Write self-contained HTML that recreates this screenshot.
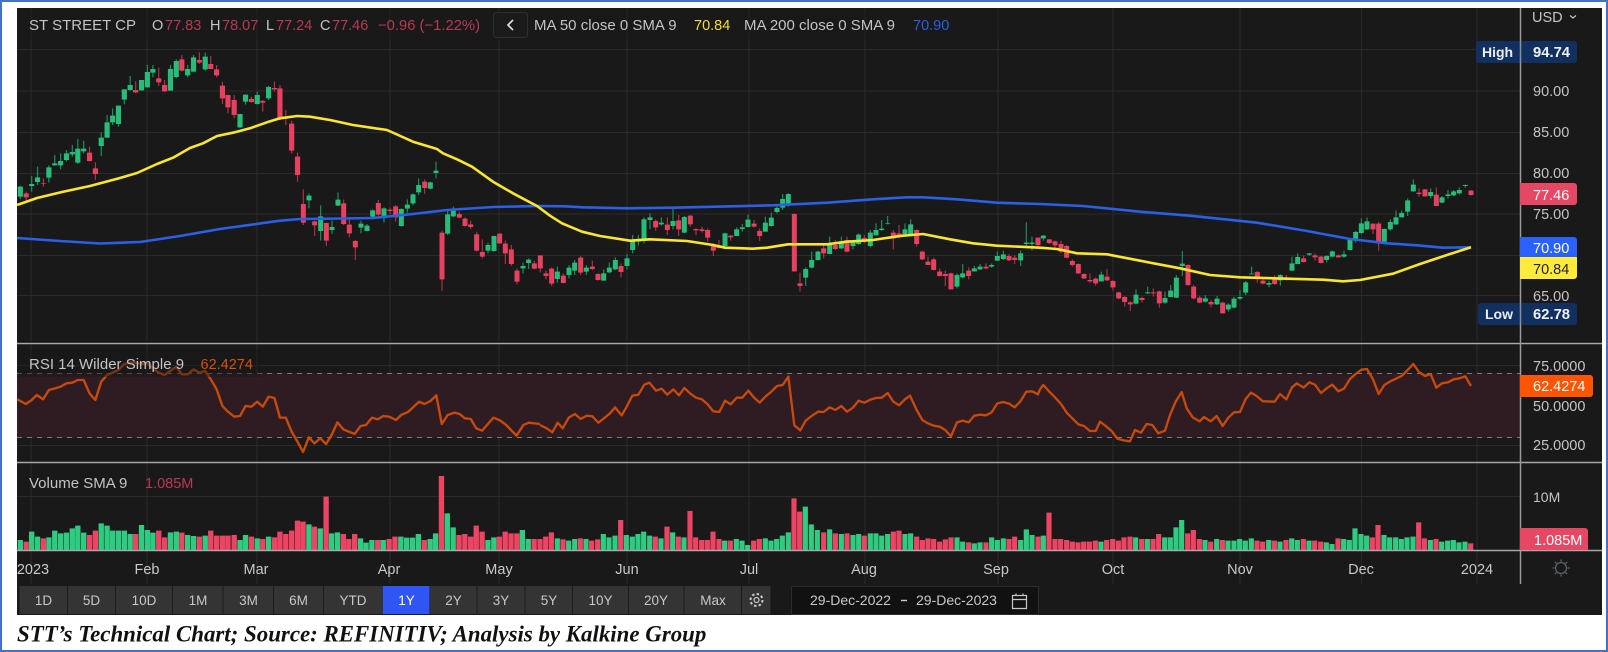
<!DOCTYPE html>
<html><head><meta charset="utf-8"><title>STT Technical Chart</title>
<style>
html,body{margin:0;padding:0;background:#fff}
svg{display:block}
text{font-family:"Liberation Sans",sans-serif;font-size:14.5px;fill:#c4c4c4}
.w{fill:#fff}
.r{fill:#b83a52}
.t{font-size:15px}
.m{text-anchor:middle;font-size:14.5px;fill:#c8c8c8}
.b{text-anchor:middle;font-size:13.5px;fill:#c8c8c8}
.gb{stroke:#27bd78;stroke-width:15;fill:none}
.gw{stroke:#1d8f5b;stroke-width:3.5;fill:none}
.rb{stroke:#e8405f;stroke-width:15;fill:none}
.rw{stroke:#a93349;stroke-width:3.5;fill:none}
.vg{stroke:#2ecb80;stroke-width:15.5;fill:none}
.vr{stroke:#ee4464;stroke-width:15.5;fill:none}
.y{fill:none;stroke:#fbe62e;stroke-width:2.6;stroke-linejoin:round}
.bl{fill:none;stroke:#2a5fe8;stroke-width:2.6;stroke-linejoin:round}
.o{fill:none;stroke:#c74a0c;stroke-width:7;stroke-linejoin:round}
</style></head><body>
<svg width="1608" height="652" viewBox="0 0 1608 652" xmlns="http://www.w3.org/2000/svg">
<defs><clipPath id="c"><rect x="17" y="8" width="1585" height="607"/></clipPath></defs>
<rect width="1608" height="652" fill="#fff"/>
<rect x="1" y="1" width="1606" height="650" fill="none" stroke="#4472c4" stroke-width="2"/>
<g clip-path="url(#c)">
<rect x="17" y="8" width="1585" height="607" fill="#191919"/>
<!-- grid -->
<path d="M17 49.5H1520M17 91H1520M17 132.500H1520M17 173.500H1520M17 214H1520M17 255.500H1520M17 295.500H1520M17 365.500H1520M17 405.500H1520M17 445.500H1520M17 496.500H1520M31 8V584M147 8V584M257 8V584M390 8V584M499 8V584M627 8V584M749 8V584M865 8V584M998 8V584M1113 8V584M1240 8V584M1361.500 8V584M1477 8V584" stroke="#2a2a2a" stroke-width="1" fill="none"/>
<!-- rsi band -->
<rect x="17" y="373" width="1503" height="65" fill="#2f1b22"/>
<path d="M17 373.500H1520M17 437.500H1520" stroke="#7a7a7a" stroke-dasharray="5 5" fill="none"/>
<!-- candles A -->
<g transform="scale(.34435,.33333)">
<path class="gw" d="M59 557V597M92 528V575M109 500V555M142 497V548M159 465V497M176 460V507M193 450V484M210 435V470M226 417V492M243 422V460M294 397V468M311 345V414M327 325V375M344 316V380M361 268V313M378 228V272M411 240V272M428 195V263M444 195V232M495 195V272M512 178V235M545 195V232M562 165V217M596 158V212M697 342V384M713 283V314M747 275V314M780 258V300"/>
<path class="rw" d="M76 575V600M126 535V560M260 440V485M277 487V540M394 243V280M461 203V258M478 240V276M528 165V215M579 157V192M612 168V208M629 195V232M646 245V312M662 284V340M680 285V355M730 290V308M763 300V335M797 245V275M813 255V360M830 330V375M847 362V460M864 458V545"/>
<path class="gb" d="M59 560V590M92 552V558M109 532V546M142 502V533M159 490V496M176 483V496M193 460V480M210 456V463M226 446V488M243 446V454M294 413V438M311 367V413M327 347V367M344 317V372M361 268V299M378 255V270M411 240V271M428 216V262M444 207V218M495 207V272M512 183V231M545 207V226M562 172V215M596 170V208M697 342V382M713 284V305M747 285V312M780 261V295"/>
<path class="rb" d="M76 580V592M126 549V551M260 458V483M277 505V522M394 270V277M461 235V247M478 255V274M528 178V212M579 180V188M612 192V207M629 208V226M646 257V295M662 285V322M680 300V345M730 297V306M763 303V308M797 264V268M813 265V357M830 350V356M847 371V452M864 470V525"/>
</g>
<!-- candles B -->
<g transform="translate(280,130) scale(.33333)">
<path class="gw" d="M87 190V235M122 226V332M156 272V312M174 187V228M243 272V310M261 282V304M278 238V268M312 232V278M364 235V290M382 208V248M399 190V226M416 145V195M451 155V178M468 95V145M503 238V315M520 230V262M624 338V370M642 317V365M729 398V430M746 385V417M832 410V458"/>
<path class="rw" d="M70 178V285M104 272V318M139 278V348M191 208V285M208 265V322M226 330V390M295 210V258M330 233V252M347 225V275M434 148V192M486 302V482M538 245V265M555 262V290M572 272V298M590 305V365M607 328V385M659 310V342M676 332V402M694 345V408M711 415V463M763 392V418M781 376V427M798 422V448M815 412V468"/>
<path class="gb" d="M87 197V211M122 259V303M156 291V300M174 209V227M243 281V293M261 287V303M278 241V260M312 235V258M364 237V288M382 224V236M399 193V220M416 165V187M451 157V176M468 122V129M503 253V311M520 242V259M624 345V362M642 318V363M729 408V415M746 389V399M832 425V447"/>
<path class="rb" d="M70 222V278M104 274V286M139 279V332M191 220V282M208 284V310M226 333V352M295 219V254M330 239V243M347 229V262M434 155V174M486 308V448M538 252V263M555 266V288M572 283V291M590 313V362M607 366V380M659 311V340M676 341V370M694 358V402M711 422V455M763 400V416M781 376V415M798 430V438M815 416V461"/>
</g>
<!-- candles C -->
<g transform="translate(540,180) scale(.33333)">
<path class="gw" d="M87 255V295M104 240V285M139 255V285M191 268V302M208 248V280M226 232V270M261 222V268M278 165V220M295 165V197M312 112V190M330 100V148M364 112V137M399 85V148M433 108V160M555 158V205M590 142V168M607 132V155M624 104V142M676 110V155M694 98V140M711 78V100M728 42V90M745 40V80M797 262V318M815 215V265M834 212V242M869 170V222M904 170V207M939 180V208M956 160V195M991 150V202M1008 130V165M1025 120V153M1043 108V133M1095 130V170M1112 118V168M1251 280V325M1268 252V295M1303 258V275M1320 252V270M1355 250V263M1372 215V243M1390 212V240M1442 212V258M1459 127V200M1476 170V212"/>
<path class="rw" d="M70 280V310M122 228V285M157 242V270M174 280V302M243 250V292M347 118V152M382 112V165M416 105V168M451 105V140M468 145V165M486 140V158M503 145V185M520 190V228M537 180V205M572 165V182M642 120V142M659 145V183M763 100V275M780 278V335M851 195V235M886 180V210M921 170V217M973 165V190M1060 150V208M1077 135V175M1130 148V200M1147 212V240M1164 230V255M1181 233V272M1199 265V290M1216 272V318M1233 278V328M1286 262V298M1338 250V268M1407 222V243M1424 225V252M1494 172V207"/>
<path class="gb" d="M87 263V285M104 248V272M139 263V275M191 280V302M208 263V277M226 240V268M261 235V258M278 180V210M295 180V185M312 118V183M330 112V120M364 128V133M399 123V138M433 111V158M555 160V198M590 148V168M607 142V147M624 119V141M676 128V155M694 113V138M711 84V96M728 57V83M745 42V72M797 267V293M815 240V263M834 215V240M869 192V222M904 187V205M939 183V198M956 164V192M991 158V198M1008 150V166M1025 146V150M1043 130V132M1095 148V163M1112 133V166M1251 285V320M1268 280V292M1303 265V274M1320 260V268M1355 255V260M1372 228V242M1390 223V237M1442 220V241M1459 188V192M1476 188V192"/>
<path class="rb" d="M70 287V309M122 233V278M157 260V267M174 282V300M243 258V276M347 123V142M382 134V150M416 121V148M451 107V133M468 147V151M486 148V153M503 150V173M520 197V212M537 196V204M572 167V172M642 131V140M659 153V168M763 102V274M780 310V318M851 205V220M886 195V207M921 180V215M973 174V180M1060 158V175M1077 160V172M1130 150V192M1147 215V238M1164 245V255M1181 238V270M1199 275V288M1216 282V288M1233 280V328M1286 272V288M1338 260V265M1407 228V241M1424 233V240M1494 173V195"/>
</g>
<!-- candles D -->
<g transform="translate(1040,170) scale(.33333)">
<path class="gw" d="M10 195V212M184 305V335M288 358V403M323 350V372M375 365V402M392 345V382M409 315V384M427 243V318M496 375V398M531 378V405M565 400V425M582 380V415M600 360V390M617 333V375M635 290V313M687 333V352M721 313V347M756 260V303M773 250V283M808 249V258M860 255V278M877 242V262M912 242V263M930 205V242M947 183V218M964 145V192M981 142V180M1033 175V218M1051 148V182M1068 122V165M1085 122V142M1103 85V138M1120 28V65M1172 55V85M1206 78V100M1224 60V85M1241 60V78M1258 52V73M1276 44V52"/>
<path class="rw" d="M28 207V222M45 212V235M63 213V250M80 225V265M97 268V290M115 280V312M132 310V327M150 310V338M167 322V347M201 297V333M219 330V362M236 365V388M254 378V410M271 393V423M306 380V398M340 355V380M358 362V413M444 283V347M461 345V388M479 378V400M513 390V412M548 395V430M652 303V338M669 325V343M704 315V345M739 315V332M791 257V278M825 250V272M843 258V280M895 253V263M999 160V192M1016 155V242M1137 55V80M1155 57V80M1189 52V108M1293 60V77"/>
<path class="gb" d="M10 197V205M184 314V334M288 374V401M323 367V370M375 384V398M392 362V381M409 323V383M427 281V288M496 385V395M531 386V403M565 404V418M582 386V413M600 381V386M617 337V368M635 311V313M687 339V344M721 315V331M756 280V302M773 261V282M808 250V254M860 258V270M877 244V260M912 253V260M930 210V240M947 186V208M964 160V189M981 154V178M1033 177V215M1051 156V178M1068 142V163M1085 129V142M1103 91V125M1120 44V64M1172 66V78M1206 82V98M1224 73V78M1241 64V76M1258 60V70M1276 45V48"/>
<path class="rb" d="M28 208V219M45 214V226M63 222V245M80 228V263M97 273V285M115 282V310M132 312V325M150 330V334M167 326V340M201 320V331M219 333V352M236 367V385M254 381V396M271 397V403M306 384V390M340 367V370M358 364V400M444 285V345M461 350V385M479 383V398M513 396V403M548 398V430M652 306V325M669 332V341M704 322V342M739 322V330M791 265V276M825 256V262M843 260V279M895 256V262M999 161V178M1016 161V219M1137 68V72M1155 58V79M1189 74V108M1293 62V75"/>
</g>
<!-- MA 200 -->
<path class="bl" d="M17 238L60 241L100 243.500L140 242L180 236L220 229L280 220.700L300 219L343 218.500L373 218L413 214L447 210L493 207L537 206L565 206.300L583 207.300L627 208.300L673 207.700L773 205.300L827 202.700L873 199.300L907 197.300L923 197.300L957 199.300L997 202.700L1040 204L1083 206L1140 211.700L1190 215.700L1257 222.700L1307 231L1350 239L1387 243.300L1417 245.300L1443 247.700L1471 247.300"/>
<!-- MA 50 -->
<path class="y" d="M17 205L37 198L62 192L90 186L120 178L137 173L157 164L173 157.700L190 148L203 143.300L217 136L233 132.700L250 128.300L267 122.300L280 118.300L297 116L310 116.700L330 120L353 125L387 130L413 141.700L437 149L443 153.300L457 159.300L472 166.700L493 181.700L513 193.300L537 206L550 215.700L562 223.300L582 231.700L600 236L630 240.700L650 239.300L687 241L713 245L725 247.700L753 248.700L767 247.700L788 244.300L827 244.300L847 241.700L873 240L900 236L923 234L950 239.300L973 243.300L997 245.700L1040 247.700L1057 249L1077 253.300L1107 254.300L1140 260.700L1180 268.300L1210 275L1240 277.300L1287 278.700L1323 279.700L1343 281.300L1360 280L1393 273.700L1420 264L1447 255L1471 247.300"/>
<!-- RSI -->
<g transform="scale(.34435,.33333) translate(0,1020)">
<path class="o" d="M50 178L75 192L92 180L107 165L125 178L142 150L160 145L176 140L193 130L210 128L226 120L243 120L260 160L277 180L294 125L311 105L327 98L344 90L361 72L378 68L395 68L411 72L428 70L444 85L461 98L478 105L495 92L512 80L528 103L545 103L562 88L579 98L596 93L612 118L629 148L646 198L662 215L680 230L697 228L713 198L730 200L747 185L763 200L780 170L797 174L813 233L830 233L847 275L864 305L880 336L897 292L913 310L930 295L947 312L963 285L980 247L997 268L1013 275L1030 282L1047 258L1063 255L1080 233L1097 238L1113 228L1130 230L1150 240L1165 225L1185 216L1217 185L1233 192L1250 183L1267 166L1283 252L1300 225L1320 218L1335 222L1350 235L1367 237L1383 265L1400 272L1433 233L1450 240L1470 255L1500 287L1520 255L1535 248L1568 252"/>
</g>
<g transform="translate(540,350) scale(.33333)">
<path class="o" d="M0 225L20 235L37 247L53 218L68 235L87 202L105 192L122 207L140 197L157 199L175 218L192 205L210 190L225 172L245 196L260 170L277 137L295 134L313 104L328 98L348 122L365 116L382 134L400 118L417 136L433 114L450 130L468 143L486 148L503 163L520 184L538 186L555 152L572 163L590 143L607 143L625 122L642 143L659 158L676 140L694 125L711 108L728 105L745 80L763 226L781 241L797 212L815 198L834 185L851 186L869 172L886 180L904 168L921 185L939 173L956 152L973 158L991 149L1008 144L1025 143L1043 129L1060 155L1077 166L1095 148L1110 137L1130 180L1147 210L1164 220L1181 227L1199 230L1216 240L1233 259L1251 217L1268 212L1286 217L1303 197L1320 194L1338 196L1355 187L1372 160L1390 156L1407 161L1424 172L1442 153L1459 125L1476 124L1494 133L1500 118"/>
</g>
<g transform="translate(1040,350) scale(.33333)">
<path class="o" d="M0 118L10 105L28 125L45 142L63 162L80 188L97 205L115 223L132 228L150 243L167 243L180 215L197 228L215 243L232 266L250 271L270 274L285 240L303 248L320 222L337 225L355 250L375 242L390 195L407 155L425 126L440 175L458 202L479 214L492 201L512 214L530 198L548 228L565 203L582 187L600 186L617 147L633 128L650 138L669 154L704 155L720 132L739 148L756 112L770 100L791 113L808 97L825 104L843 129L860 115L877 104L895 124L912 116L930 87L947 72L964 59L981 57L999 88L1016 132L1033 105L1051 94L1068 86L1085 78L1103 60L1120 42L1137 66L1155 78L1172 72L1189 113L1206 100L1224 97L1241 88L1258 85L1276 79L1293 108"/>
</g>
<!-- volume A -->
<g transform="translate(0,340) scale(.34435,.33333)">
<path class="vg" d="M59 600V630M92 575V630M109 590V630M142 592V630M159 572V630M176 580V630M193 578V630M210 565V630M226 557V630M243 578V630M294 550V630M311 557V630M327 572V630M344 572V630M361 572V630M378 582V630M411 555V630M428 570V630M444 578V630M495 577V630M512 575V630M545 585V630M562 588V630M596 587V630M697 600V630M713 585V630M747 595V630M780 590V630M897 553V630M930 565V630M963 580V630M980 577V630M1047 595V630M1063 608V630M1080 600V630M1113 600V630M1164 590V630M1181 593V630M1198 593V630M1215 582V630M1249 597V630M1265 580V630M1299 520V630M1316 562V630M1417 600V630M1434 592V630M1517 570V630M1534 597V630"/>
<path class="vr" d="M76 605V630M126 595V630M260 585V630M277 572V630M394 582V630M461 572V630M478 592V630M528 578V630M579 590V630M612 572V630M629 587V630M646 587V630M662 587V630M680 585V630M730 590V630M763 597V630M797 592V630M813 575V630M830 582V630M847 572V630M864 542V630M880 545V630M913 560V630M947 470V630M997 582V630M1013 597V630M1030 582V630M1097 600V630M1130 597V630M1147 590V630M1232 600V630M1282 408V630M1333 585V630M1350 582V630M1367 590V630M1383 557V630M1400 575V630M1450 590V630M1467 575V630M1484 580V630M1501 580V630M1551 597V630"/>
</g>
<!-- volume B -->
<g transform="translate(540,350) scale(.33333)">
<path class="vg" d="M52 565V600M86 572V600M104 567V600M138 567V600M190 552V600M207 562V600M225 557V600M259 555V600M277 560V600M294 552V600M311 545V600M329 557V600M363 565V600M398 547V600M432 562V600M554 572V600M589 567V600M606 572V600M623 585V600M676 565V600M693 572V600M710 567V600M727 557V600M745 547V600M796 470V600M814 523V600M832 540V600M869 538V600M904 552V600M939 555V600M956 552V600M991 550V600M1008 550V600M1025 557V600M1043 552V600M1095 552V600M1112 550V600M1251 562V600M1268 575V600M1303 580V600M1320 577V600M1355 562V600M1372 570V600M1390 565V600M1442 570V600M1459 538V600M1476 555V600"/>
<path class="vr" d="M0 567V600M17 560V600M34 547V600M69 568V600M121 565V600M155 572V600M173 568V600M242 510V600M346 560V600M381 530V600M415 560V600M450 483V600M467 562V600M485 570V600M502 570V600M519 545V600M537 567V600M571 572V600M641 572V600M658 567V600M762 445V600M779 485V600M851 547V600M886 550V600M921 550V600M973 557V600M1060 545V600M1077 542V600M1130 560V600M1147 570V600M1164 565V600M1181 567V600M1199 575V600M1216 568V600M1233 562V600M1286 577V600M1338 577V600M1407 567V600M1424 560V600M1494 560V600"/>
</g>
<!-- volume C -->
<g transform="translate(1040,350) scale(.33333)">
<path class="vg" d="M10 557V600M183 575V600M287 562V600M322 567V600M374 562V600M391 562V600M408 532V600M425 510V600M495 570V600M530 567V600M564 572V600M582 572V600M599 567V600M616 572V600M634 565V600M686 570V600M720 575V600M755 565V600M772 570V600M807 572V600M859 577V600M876 582V600M911 567V600M928 570V600M945 535V600M963 552V600M980 557V600M1032 555V600M1049 562V600M1067 562V600M1084 567V600M1101 562V600M1119 560V600M1171 570V600M1205 575V600M1223 572V600M1240 570V600M1257 577V600M1275 575V600"/>
<path class="vr" d="M27 488V600M45 567V600M62 567V600M80 570V600M97 575V600M114 577V600M131 575V600M148 575V600M166 572V600M200 570V600M218 567V600M235 572V600M252 562V600M270 560V600M305 567V600M339 567V600M356 552V600M443 550V600M460 540V600M478 567V600M512 575V600M547 570V600M651 572V600M668 575V600M703 572V600M738 570V600M790 567V600M824 572V600M842 575V600M894 565V600M997 562V600M1014 525V600M1136 517V600M1153 565V600M1188 567V600M1292 580V600"/>
</g>
<!-- pane lines -->
<path d="M17 342H1602" stroke="#0e0e0e" stroke-width="1"/>
<path d="M17 343.500H1602M17 462.500H1602M17 550.500H1602" stroke="#a8a8a8" stroke-width="1.500"/>
<path d="M1520.500 8V584" stroke="#9a9a9a" stroke-width="1.500"/>
<!-- header -->
<rect x="18" y="10" width="1000" height="30" fill="#191919" opacity=".35"/>
<text class="t" x="29" y="30">ST STREET CP</text>
<text x="152" y="30">O</text><text x="165" y="30" class="r">77.83</text>
<text x="210" y="30">H</text><text x="222" y="30" class="r">78.07</text>
<text x="266" y="30">L</text><text x="276" y="30" class="r">77.24</text>
<text x="320" y="30">C</text><text x="332" y="30" class="r">77.46</text>
<text x="378" y="30" class="r" style="font-size:14.8px">−0.96 (−1.22%)</text>
<rect x="493.500" y="12.500" width="34" height="25" rx="3" fill="#1b1b1b" stroke="#2e2e2e"/>
<path d="M513 20L508 25L513 30" fill="none" stroke="#ddd" stroke-width="1.700"/>
<text class="t" x="534" y="30">MA 50 close 0 SMA 9</text>
<text x="694" y="30" style="fill:#f4df2c">70.84</text>
<text class="t" x="744" y="30">MA 200 close 0 SMA 9</text>
<text x="913" y="30" style="fill:#2a5fe0">70.90</text>
<!-- RSI / volume legends -->
<rect x="18" y="350" width="243" height="27" fill="#191919" opacity=".45"/>
<text class="t" x="29" y="369">RSI 14 Wilder Simple 9</text>
<text x="200.500" y="369" style="fill:#d9500b">62.4274</text>
<text class="t" x="29" y="488">Volume SMA 9</text>
<text x="145" y="488" style="fill:#b83a52">1.085M</text>
<!-- axis labels -->
<text x="1532" y="22">USD</text>
<path d="M1570 15.500L1573 18L1576 15.500" fill="none" stroke="#c4c4c4" stroke-width="1.200"/>
<text x="1533" y="96">90.00</text>
<text x="1533" y="137">85.00</text>
<text x="1533" y="178">80.00</text>
<text x="1533" y="219">75.00</text>
<text x="1533" y="301">65.00</text>
<rect x="1476" y="41" width="101" height="22" rx="3" fill="#12305f"/>
<path d="M1520.500 41V63" stroke="#8a8f98" stroke-width="1.500"/>
<text x="1482" y="57" style="font-weight:bold;fill:#e8edf5;font-size:14px">High</text>
<text x="1533" y="57" style="fill:#eef1f6;font-weight:bold;font-size:14.8px">94.74</text>
<rect x="1478" y="303" width="99" height="22" rx="3" fill="#12305f"/>
<path d="M1520.500 303V325" stroke="#8a8f98" stroke-width="1.500"/>
<text x="1485" y="319" style="fill:#e8edf5;font-weight:bold;font-size:14px">Low</text>
<text x="1533" y="319" style="fill:#eef1f6;font-weight:bold;font-size:14.8px">62.78</text>
<path d="M1520 183H1574a3 3 0 0 1 3 3V202a3 3 0 0 1-3 3H1520Z" fill="#e64763"/>
<text x="1533" y="200" style="fill:#fff;font-size:14.5px">77.46</text>
<path d="M1520 237H1574a3 3 0 0 1 3 3V257H1520Z" fill="#2962ff"/>
<text x="1533" y="253" style="fill:#fff;font-size:14.5px">70.90</text>
<path d="M1520 257H1577V276a3 3 0 0 1-3 3H1520Z" fill="#ffeb3b"/>
<text x="1533" y="274" style="fill:#222;font-size:14.5px">70.84</text>
<text x="1533" y="371">75.0000</text>
<path d="M1520 375H1590a3 3 0 0 1 3 3V394a3 3 0 0 1-3 3H1520Z" fill="#ff5500"/>
<text x="1533" y="391" style="fill:#fff">62.4274</text>
<text x="1533" y="411">50.0000</text>
<text x="1533" y="450">25.0000</text>
<text x="1533" y="502" style="font-size:14px">10M</text>
<path d="M1520 528H1585a3 3 0 0 1 3 3V550H1520Z" fill="#e64763"/>
<text x="1534" y="545" style="fill:#fff">1.085M</text>
<!-- x axis -->
<text class="m" x="33" y="574">2023</text>
<text class="m" x="147" y="574">Feb</text>
<text class="m" x="256" y="574">Mar</text>
<text class="m" x="389" y="574">Apr</text>
<text class="m" x="499" y="574">May</text>
<text class="m" x="627" y="574">Jun</text>
<text class="m" x="749" y="574">Jul</text>
<text class="m" x="864" y="574">Aug</text>
<text class="m" x="996" y="574">Sep</text>
<text class="m" x="1113" y="574">Oct</text>
<text class="m" x="1240" y="574">Nov</text>
<text class="m" x="1361" y="574">Dec</text>
<text class="m" x="1477" y="574">2024</text>
<!-- sun icon -->
<g fill="none" stroke="#5c6068" stroke-width="1.300">
<circle cx="1561" cy="568" r="5.500"/>
<path d="M1561 559.500V561.500M1561 574.500V576.500M1552.500 568H1554.500M1567.500 568H1569.500M1555 562L1556.500 563.500M1565.500 572.500L1567 574M1567 562L1565.500 563.500M1556.500 572.500L1555 574"/>
</g>
<!-- range buttons -->
<rect x="19.500" y="586" width="751" height="28" fill="#343434"/>
<path d="M67.500 586V614M115.500 586V614M172.500 586V614M223 586V614M273.500 586V614M323.500 586V614M429.500 586V614M477 586V614M525 586V614M572.500 586V614M628.500 586V614M684 586V614M741.500 586V614" stroke="#1c1c1c" stroke-width="1"/>
<rect x="383" y="586" width="46.500" height="28" fill="#2f55f5"/>
<text class="b" x="43.500" y="605">1D</text>
<text class="b" x="91.500" y="605">5D</text>
<text class="b" x="144" y="605">10D</text>
<text class="b" x="198" y="605">1M</text>
<text class="b" x="248.500" y="605">3M</text>
<text class="b" x="298.500" y="605">6M</text>
<text class="b" x="353" y="605">YTD</text>
<text class="b" x="406.500" y="605" style="fill:#fff">1Y</text>
<text class="b" x="453.500" y="605">2Y</text>
<text class="b" x="501" y="605">3Y</text>
<text class="b" x="549" y="605">5Y</text>
<text class="b" x="600.500" y="605">10Y</text>
<text class="b" x="656" y="605">20Y</text>
<text class="b" x="713" y="605">Max</text>
<g fill="none" stroke="#c8c8c8">
<circle cx="756.500" cy="600" r="2.500" stroke-width="1.200"/>
<circle cx="756.500" cy="600" r="6" stroke-width="2" stroke-dasharray="2.500 2.200"/>
</g>
<rect x="791.500" y="586.500" width="247" height="28" fill="#111" stroke="#2c2c2c"/>
<text x="810" y="605" style="font-size:14px;fill:#c8c8c8">29-Dec-2022</text>
<path d="M901 600.500H907" stroke="#c8c8c8" stroke-width="1.500"/>
<text x="916" y="605" style="font-size:14px;fill:#c8c8c8">29-Dec-2023</text>
<path d="M1012.500 595.500H1026.500V608.500H1012.500ZM1012.500 599.500H1026.500M1016 593.500V596M1023 593.500V596" fill="none" stroke="#c8c8c8" stroke-width="1.200"/>
</g>
<text x="17" y="641.500" style="font-family:'Liberation Serif',serif;font-style:italic;font-weight:bold;font-size:22.900px;fill:#111">STT’s Technical Chart; Source: REFINITIV; Analysis by Kalkine Group</text>
</svg>
</body></html>
